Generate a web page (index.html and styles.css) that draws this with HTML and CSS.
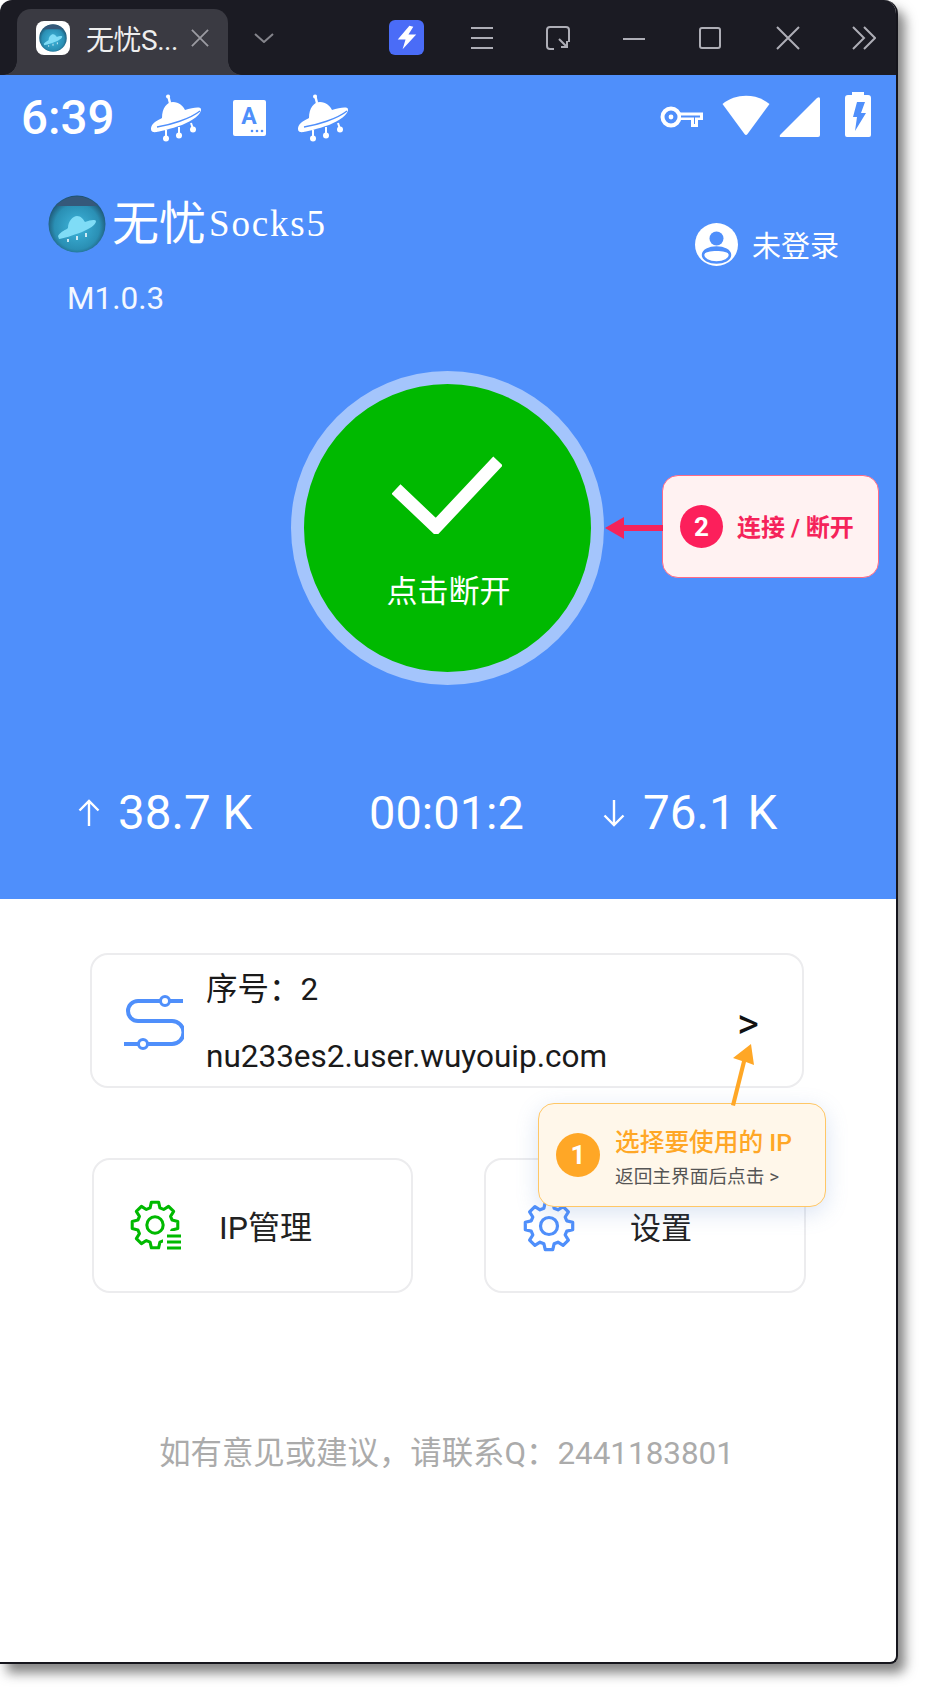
FILE: index.html
```html
<!DOCTYPE html>
<html lang="zh-CN">
<head>
<meta charset="utf-8">
<title>无忧Socks5</title>
<link rel="stylesheet" href="styles.css">
</head>
<body>
<svg class="defs" width="0" height="0" aria-hidden="true">
  <defs>
    <radialGradient id="orb" cx="50%" cy="55%" r="55%">
      <stop offset="0" stop-color="#3fb6dc"/>
      <stop offset=".72" stop-color="#2a8fb4"/>
      <stop offset="1" stop-color="#1d4f6c"/>
    </radialGradient>
    <symbol id="ufo" viewBox="0 0 52 48">
      <path d="M18 1 20 9" fill="none" stroke="#fff" stroke-width="2.4"/>
      <circle cx="18" cy="2.5" r="2" fill="#fff"/>
      <path d="M1 34C2 28 9 26 12 24 12 14 17 8 23 8 29 8 33 12 35 16 42 14 50 12 51 15 52 20 42 27 32 31 20 35 6 39 3 38 1 37 1 36 1 34Z" fill="#fff"/>
      <path d="M7 33C20 31 40 25 50 17" fill="none" stroke="#4f8ffb" stroke-width="1.4"/>
      <path d="M16 36V44M29 33V41M41 29 43 35" fill="none" stroke="#fff" stroke-width="2"/>
      <circle cx="16" cy="44.500" r="3" fill="#fff"/>
      <circle cx="29" cy="41.500" r="3" fill="#fff"/>
      <circle cx="43" cy="35.500" r="3" fill="#fff"/>
    </symbol>
    <symbol id="orbufo" viewBox="0 0 58 58">
      <circle cx="29" cy="29" r="28.5" fill="url(#orb)"/>
      <path d="M8 11A28 28 0 0 1 50 11Z" fill="#35587a"/>
      <path d="M10 41C13 36 18 35 20 33 20 26 25 21 29 21 33 21 35 24 37 27 42 25 47 24 48 26 48 30 41 34 34 37 26 40 14 44 11 44Z" fill="#7fdcf6"/>
      <path d="M20 44V47M29 41V45M38 38V42" stroke="#cfeaf4" stroke-width="2"/>
    </symbol>
    <symbol id="gear" viewBox="-26 -26 52 52">
      <polygon points="-5.1,-17.8 -3.75,-23.7 3.75,-23.7 5.1,-17.8 8.98,-16.19 14.11,-19.41 19.41,-14.11 16.19,-8.98 17.8,-5.1 23.7,-3.75 23.7,3.75 17.8,5.1 16.19,8.98 19.41,14.11 14.11,19.41 8.98,16.19 5.1,17.8 3.75,23.7 -3.75,23.7 -5.1,17.8 -8.98,16.19 -14.11,19.41 -19.41,14.11 -16.19,8.98 -17.8,5.1 -23.7,3.75 -23.7,-3.75 -17.8,-5.1 -16.19,-8.98 -19.41,-14.11 -14.11,-19.41 -8.98,-16.19" fill="#fff" stroke="currentColor" stroke-width="3.2" stroke-linejoin="round"/>
      <circle r="8.5" fill="none" stroke="currentColor" stroke-width="3.2"/>
    </symbol>
  </defs>
</svg>

<div class="window">
  <header class="titlebar">
    <div class="tab">
      <span class="favicon"><svg class="favicon-img" viewBox="0 0 58 58"><use href="#orbufo"/></svg></span>
      <span class="tab-title">无忧S...</span>
      <svg class="tb-icon tab-close" viewBox="0 0 20 20"><path d="M1 1 19 19M19 1 1 19"/></svg>
    </div>
    <svg class="tb-icon tab-more" viewBox="0 0 20 10"><path d="M1 1 10 9 19 1"/></svg>
    <span class="boost"><svg viewBox="0 0 36 36" class="boost-bolt"><path d="M21 6 9 20H17L14 30 28 15H20L25 7Z" fill="#fff"/></svg></span>
    <div class="win-controls">
      <svg class="tb-icon" viewBox="0 0 24 24"><path d="M1 2H23M1 12H23M1 22H23"/></svg>
      <svg class="tb-icon" viewBox="0 0 24 24"><path d="M8 23H4Q1 23 1 20V4Q1 1 4 1H20Q23 1 23 4V16M13 13 21 21M21 15V21H15"/></svg>
      <svg class="tb-icon" viewBox="0 0 24 24"><path d="M1 13H23"/></svg>
      <svg class="tb-icon" viewBox="0 0 24 24"><rect x="2" y="2" width="20" height="20" rx="2"/></svg>
      <svg class="tb-icon tb-close" viewBox="0 0 24 24"><path d="M1 1 23 23M23 1 1 23"/></svg>
      <svg class="tb-icon" viewBox="0 0 24 24"><path d="M1 1 12 12 1 23M12 1 23 12 12 23"/></svg>
    </div>
  </header>

  <section class="hero">
    <div class="status">
      <span class="clock">6:39</span>
      <svg class="ufo ufo-first"><use href="#ufo"/></svg>
      <svg class="a-icon" viewBox="0 0 33 36">
        <rect width="33" height="36" rx="2" fill="#fff"/>
        <text x="16" y="24" text-anchor="middle" class="a-letter">A</text>
        <circle cx="19" cy="31" r="1.3" fill="#4f8ffb"/><circle cx="24" cy="31" r="1.3" fill="#4f8ffb"/><circle cx="29" cy="31" r="1.3" fill="#4f8ffb"/>
      </svg>
      <svg class="ufo ufo-second"><use href="#ufo"/></svg>
      <svg class="key" viewBox="0 0 44 24"><circle cx="11" cy="12" r="8.5" fill="none" stroke="#fff" stroke-width="4"/><circle cx="11" cy="12" r="2.4" fill="#fff"/><path d="M19 7.5H43V15H38V22H31V15H19Z" fill="#fff"/><path d="M21 10.5H40V12.5H35V19H34V12.5H21Z" fill="#4f8ffb"/></svg>
      <svg class="wifi" viewBox="0 0 49 41"><path d="M1 9C14-2 35-2 48 9L26 39Q24.500 41 23 39Z" fill="#fff"/></svg>
      <svg class="signal" viewBox="0 0 41 41"><path d="M1 39 38 2Q41 0 41 3V39Q41 41 39 41H2Q0 41 1 39Z" fill="#fff"/></svg>
      <svg class="battery" viewBox="0 0 26 45"><path d="M7 0H19V3H23Q26 3 26 6V43Q26 45 24 45H2Q0 45 0 43V6Q0 3 3 3H7Z" fill="#fff"/><path d="M12 10H20L16 21H21L10 39 12 25H8Z" fill="#4f8ffb"/></svg>
    </div>

    <div class="head">
      <div class="brand">
        <div class="brand-row">
          <svg class="brand-logo"><use href="#orbufo"/></svg>
          <span class="brand-cn">无忧</span><span class="brand-en">Socks5</span>
        </div>
        <div class="version">M1.0.3</div>
      </div>
      <div class="user">
        <svg class="user-icon" viewBox="0 0 43 43"><circle cx="21.500" cy="21.500" r="21.500" fill="#fff"/><circle cx="21.500" cy="15.500" r="7" fill="#4f8ffb"/><ellipse cx="21.500" cy="32" rx="13.500" ry="7.500" fill="#fff" stroke="#4f8ffb" stroke-width="2.500"/><path d="M8 32C9 26 15 24 21.500 24S34 26 35 32C32 26.500 11 26.500 8 32Z" fill="#4f8ffb"/></svg>
        <span>未登录</span>
      </div>
    </div>

    <button class="power" type="button">
      <svg class="check" viewBox="0 0 110 78"><path d="M4 33 44 71 106 5" fill="none" stroke="#fff" stroke-width="13"/></svg>
      <span class="power-label">点击断开</span>
    </button>

    <div class="stats">
      <div class="stat"><svg class="stat-arrow" viewBox="0 0 22 28"><path d="M11 27V2M1.500 11.500 11 2 20.500 11.500"/></svg><span>38.7 K</span></div>
      <div class="stat stat-time">00:01:2</div>
      <div class="stat"><svg class="stat-arrow" viewBox="0 0 22 28"><path d="M11 1V26M1.500 16.500 11 26 20.500 16.500"/></svg><span>76.1 K</span></div>
    </div>

    <aside class="note note-pink">
      <span class="note-num">2</span>
      <strong class="note-title">连接 / 断开</strong>
      <svg class="note-arrow-pink" viewBox="0 0 58 22"><path d="M0 11 19 0V8H58V14H19V22Z" fill="#f5235a"/></svg>
    </aside>
  </section>

  <main class="content">
    <div class="route">
      <svg class="route-icon" viewBox="0 0 60 56"><path d="M59 6H14A10 10 0 0 0 14 26H48A11.500 11.500 0 0 1 48 49H0" fill="none" stroke="#4f8ffb" stroke-width="4"/><circle cx="41" cy="6" r="4.500" fill="#fff" stroke="#4f8ffb" stroke-width="3"/><circle cx="19" cy="49" r="4.500" fill="#fff" stroke="#4f8ffb" stroke-width="3"/></svg>
      <div class="route-text">
        <div>序号：2</div>
        <div>nu233es2.user.wuyouip.com</div>
      </div>
      <span class="route-go">&gt;</span>
    </div>

    <div class="actions">
      <div class="action">
        <svg class="action-icon icon-green" viewBox="0 0 52 52"><use href="#gear" width="50" height="50" x="0" y="1"/><rect x="33" y="32" width="19" height="20" fill="#fff"/><path d="M37 37H51M37 43H51M37 49H51" stroke="currentColor" stroke-width="3"/></svg>
        <span class="action-label">IP管理</span>
      </div>
      <div class="action action-settings">
        <svg class="action-icon icon-blue" viewBox="0 0 52 52"><use href="#gear" width="52" height="52"/></svg>
        <span class="action-label action-label-wide">设置</span>
      </div>
    </div>

    <p class="footer-note">如有意见或建议，请联系Q：2441183801</p>

    <aside class="note note-amber">
      <span class="note-num">1</span>
      <div class="note-body">
        <strong class="note-title">选择要使用的 IP</strong>
        <span class="note-sub">返回主界面后点击 &gt;</span>
      </div>
      <svg class="note-arrow-amber" viewBox="0 0 24 62"><path d="M20 0 23 21 15 18 4 62 0 61 11 17 2 14Z" fill="#ffa726"/></svg>
    </aside>
  </main>
</div>
</body>
</html>
```

FILE: styles.css
```css
* { box-sizing: border-box; }
html, body { margin: 0; background: #fff; }
body {
  width: 928px;
  height: 1695px;
  overflow: hidden;
  font-family: Roboto, "Noto Sans CJK SC", sans-serif;
}
.defs { position: absolute; }

.window {
  width: 898px;
  height: 1664px;
  background: #fff;
  border-right: 2px solid #15151c;
  border-bottom: 2px solid #15151c;
  border-radius: 12px 14px 8px 0;
  box-shadow: 7px 9px 12px rgba(50, 50, 50, .6);
  overflow: hidden;
}

/* title bar */
.titlebar {
  height: 75px;
  background: #1b1b23;
  display: flex;
  align-items: center;
  padding-left: 17px;
}
.tab {
  align-self: flex-end;
  width: 211px;
  height: 66px;
  background: #3a3a42;
  border-radius: 14px 14px 0 0;
  display: flex;
  align-items: center;
  padding: 0 19px 8px 19px;
  color: #eee;
  position: relative;
}
.tab::before, .tab::after {
  content: "";
  position: absolute;
  bottom: 0;
  width: 14px;
  height: 14px;
  background: radial-gradient(circle at var(--cx) 0, transparent 13.500px, #3a3a42 14px);
}
.tab::before { left: -14px; --cx: 0; }
.tab::after { right: -14px; --cx: 100%; }
.favicon {
  width: 34px;
  height: 34px;
  background: #fff;
  border-radius: 8px;
  display: flex;
  align-items: center;
  justify-content: center;
  flex: none;
}
.favicon-img { width: 28px; height: 28px; }
.tab-title {
  margin-left: 16px;
  font-size: 28px;
  white-space: nowrap;
  letter-spacing: -.5px;
  flex: 1;
}
.tb-icon {
  width: 24px;
  height: 24px;
  fill: none;
  stroke: #aeaeb6;
  stroke-width: 2;
  flex: none;
  display: block;
}
.tab-close { width: 18px; height: 18px; stroke: #9b9ba2; }
.tab-more { width: 20px; height: 10px; margin-left: 26px; stroke: #85858c; }
.boost {
  width: 35px;
  height: 35px;
  margin-left: 115px;
  border-radius: 6px;
  background: #4a6cf7;
  flex: none;
}
.boost-bolt { display: block; width: 35px; height: 35px; }
.win-controls {
  display: flex;
  gap: 52px;
  margin-left: 46px;
}
.tb-close { margin-left: 2px; }

/* hero */
.hero {
  height: 824px;
  background: #4f8ffb;
  color: #fff;
  display: flex;
  flex-direction: column;
  position: relative;
}
.status {
  height: 86px;
  display: flex;
  align-items: center;
  padding-left: 21px;
}
.clock { font-size: 47.500px; font-weight: 500; width: 129px; flex: none; }
.ufo { width: 52px; height: 48px; flex: none; }
.a-icon { width: 33px; height: 36px; margin-left: 31px; flex: none; }
.a-letter { font: 700 23px Roboto, sans-serif; fill: #4f8ffb; }
.ufo-second { margin-left: 31px; }
.key { width: 44px; height: 24px; margin: -2px 0 0 311px; flex: none; }
.wifi { width: 50px; height: 41px; margin: -5px 0 0 17px; flex: none; }
.signal { width: 41px; height: 41px; margin: -4px 0 0 8px; flex: none; }
.battery { width: 26px; height: 45px; margin: -8px 0 0 25px; flex: none; }

.head {
  height: 210px;
  display: flex;
  justify-content: space-between;
  padding: 30px 57px 0 48px;
}
.brand-row {
  display: flex;
  align-items: center;
  height: 60px;
  margin-top: 3px;
}
.brand-logo { width: 58px; height: 58px; flex: none; }
.brand-cn {
  margin: -10px 0 0 6px;
  font-size: 47px;
  font-weight: 400;
  font-family: "Noto Sans CJK SC", sans-serif;
}
.brand-en {
  margin: -2px 0 0 3px;
  font-family: "Liberation Serif", serif;
  font-size: 37px;
  letter-spacing: 1.800px;
}
.version {
  margin: 27px 0 0 19px;
  font-size: 31.500px;
  line-height: 36px;
  color: #f4f8ff;
}
.user {
  display: flex;
  align-items: center;
  gap: 14px;
  height: 44px;
  margin-top: 31px;
  font-size: 29px;
}
.user-icon { width: 43px; height: 43px; }

.power {
  align-self: center;
  width: 313px;
  height: 314px;
  margin-left: -1px;
  border: 13px solid #a4c5fc;
  border-radius: 50%;
  background: #00b900;
  color: #fff;
  padding: 0;
  font-family: inherit;
  display: flex;
  flex-direction: column;
  align-items: center;
  flex: none;
}
.check { width: 110px; height: 78px; margin-top: 72px; margin-left: -1px; }
.power-label {
  margin: 38px 0 0 2px;
  font-size: 31px;
  line-height: 40px;
}

.stats {
  display: grid;
  grid-template-columns: 291px 234px 1fr;
  padding-left: 78px;
  margin-top: 101px;
  font-size: 47.500px;
  line-height: 54px;
}
.stat { display: flex; align-items: center; gap: 18px; white-space: nowrap; }
.stat-time { font-size: 47px; }
.stat-arrow { width: 22px; height: 28px; fill: none; stroke: #fff; stroke-width: 2.400; }

/* callouts */
.note { position: absolute; display: flex; align-items: center; border-radius: 16px; }
.note-num {
  border-radius: 50%;
  color: #fff;
  font-weight: 700;
  display: flex;
  align-items: center;
  justify-content: center;
  flex: none;
}
.note-pink {
  left: 662px;
  top: 400px;
  width: 217px;
  height: 103px;
  background: #fff2f2;
  border: 1.500px solid #ff6a88;
  padding-left: 17px;
}
.note-pink .note-num { width: 43px; height: 43px; background: #fc1f5b; font-size: 26px; }
.note-pink .note-title { margin: -2px 0 0 14px; font-size: 24px; color: #f5235a; white-space: nowrap; font-weight: 700; }
.note-arrow-pink { position: absolute; left: -58px; top: 41px; width: 58px; height: 22px; }

.note-amber {
  left: 538px;
  top: 204px;
  width: 288px;
  height: 104px;
  background: #fff7ea;
  border: 1.500px solid #ffc766;
  box-shadow: 0 6px 22px rgba(90, 130, 200, .22);
  padding-left: 17px;
}
.note-amber .note-num { width: 44px; height: 44px; background: #ffa726; font-size: 26px; }
.note-body { display: flex; flex-direction: column; margin-left: 15px; padding-top: 7px; }
.note-amber .note-title { font-size: 24.700px; line-height: 32px; color: #ffa726; font-weight: 500; white-space: nowrap; }
.note-sub { font-size: 18.700px; line-height: 26px; color: #555; margin-top: 5px; white-space: nowrap; }
.note-arrow-amber { position: absolute; left: 192px; top: -60px; width: 24px; height: 62px; }

/* lower part */
.content { position: relative; padding-top: 54px; }
.route {
  width: 714px;
  height: 135px;
  margin-left: 90px;
  border: 2px solid #ececee;
  border-radius: 18px;
  display: flex;
  align-items: center;
  padding-left: 32px;
  color: #1a1a1a;
}
.route-icon { width: 60px; height: 56px; flex: none; margin-top: 4px; }
.route-text {
  margin-left: 22px;
  flex: 1;
  font-size: 31.500px;
  line-height: 67px;
  white-space: nowrap;
  margin-top: 4px;
}
.route-go { font-size: 42px; font-weight: 400; margin-right: 43px; color: #111; margin-top: 6px; }

.actions {
  display: grid;
  grid-template-columns: 321px 322px;
  gap: 71px;
  margin: 70px 0 0 92px;
}
.action {
  height: 135px;
  border: 2px solid #ececee;
  border-radius: 18px;
  display: flex;
  align-items: center;
  padding-left: 36px;
  color: #222;
}
.action-settings { padding-left: 37px; }
.action-icon { width: 52px; height: 52px; flex: none; }
.icon-green { color: #00b900; margin-top: -2px; }
.icon-blue { color: #4f8ffb; }
.action-label { margin: -2px 0 0 37px; font-size: 32px; }
.action-label-wide { margin: 0 0 0 55px; font-size: 31px; }

.footer-note {
  margin: 140px 3px 0 0;
  text-align: center;
  font-size: 31.400px;
  line-height: 42px;
  color: #ababab;
}
```
